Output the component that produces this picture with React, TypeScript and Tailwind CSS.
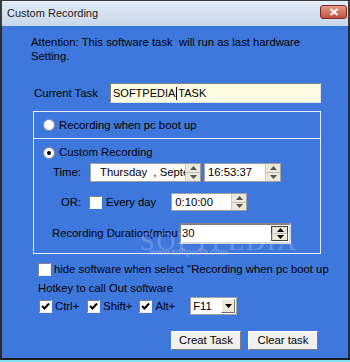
import React from 'react';

const font = { fontFamily: '"Liberation Sans", Arial, sans-serif' };

function Spin({ dark = false }: { dark?: boolean }) {
  const c = dark ? '#000' : '#555';
  return (
    <div className="flex h-full w-[15px] flex-col border-l border-[#c8c8c8] bg-[#ece9d8]">
      <div className="flex flex-1 items-center justify-center border-b border-[#bdbdbd]">
        <svg width="7" height="4" viewBox="0 0 7 4">
          <path d="M3.5 0 L7 4 L0 4 Z" fill={c} />
        </svg>
      </div>
      <div className="flex flex-1 items-center justify-center">
        <svg width="7" height="4" viewBox="0 0 7 4">
          <path d="M0 0 L7 0 L3.5 4 Z" fill={c} />
        </svg>
      </div>
    </div>
  );
}

function Radio({ on = false }: { on?: boolean }) {
  return (
    <span className="flex h-[12px] w-[12px] items-center justify-center rounded-full border border-[#8a8a8a] bg-white">
      {on && <span className="h-[4px] w-[4px] rounded-full bg-black" />}
    </span>
  );
}

function Check({ on = false }: { on?: boolean }) {
  return (
    <span className="flex h-[13px] w-[13px] shrink-0 items-center justify-center border border-t-[#808080] border-l-[#808080] border-r-[#f0f0f0] border-b-[#f0f0f0] bg-white">
      {on && (
        <svg width="9" height="9" viewBox="0 0 9 9">
          <path d="M1 4 L3.5 6.5 L8 1.5" stroke="#000" strokeWidth="2" fill="none" />
        </svg>
      )}
    </span>
  );
}

function Button({ label }: { label: string }) {
  return (
    <div className="flex h-[19px] w-[70px] items-center justify-center border border-t-white border-l-white border-r-[#7d7d7d] border-b-[#7d7d7d] bg-[#f1f1f1] text-black">
      {label}
    </div>
  );
}

export default function App() {
  return (
    <div className="relative flex h-[362px] w-[350px] flex-col overflow-hidden bg-[#3f78dc] text-[11.3px] text-black" style={font}>
      <div className="flex h-[26px] items-center justify-between border-l-2 border-t border-r-2 border-[#3a3a3a] bg-gradient-to-b from-[#e4ecf6] to-[#c6d7ec] pl-[5px] pr-[1px]">
        <span className="text-[11px] text-[#1b1b1b]">Custom Recording</span>
        <div className="mb-[3px] flex h-[14px] w-[27px] items-center justify-center rounded-[3px] border border-[#7d2a22] bg-gradient-to-b from-[#e39a88] to-[#c2503f]">
          <svg width="10" height="8" viewBox="0 0 10 8">
            <path d="M1.5 1 L8.5 7 M8.5 1 L1.5 7" stroke="#fff" strokeWidth="2" />
          </svg>
        </div>
      </div>

      <div className="flex flex-1 flex-col border-l-2 border-r-2 border-[#2a2a2a] pl-[29px]">
        <p className="mt-[9px] leading-[14px]">
          Attention: This software task&nbsp; will run as last hardware
          <br />
          Setting.
        </p>

        <div className="mt-[20px] flex h-[20px] items-center">
          <span className="ml-[3px] w-[76px]">Current Task</span>
          <div className="flex h-[20px] w-[211px] items-center border border-t-[#808080] border-l-[#808080] border-r-[#e0e0e0] border-b-[#e0e0e0] bg-[#fffbe2] pl-[2px] text-[11px]">
            SOFTPEDIA<span className="mx-[1px] inline-block h-[13px] w-px bg-black" />TASK
          </div>
        </div>

        <div className="ml-[2px] mt-[8px] flex h-[143px] w-[288px] flex-col border border-[#e6edf8]">
          <div className="flex h-[26px] items-center gap-[4px] pl-[9px]">
            <Radio />
            <span>Recording when pc boot up</span>
          </div>
          <div className="h-px bg-[#e6edf8]" />
          <div className="mt-[6px] flex h-[15px] items-center gap-[4px] pl-[9px]">
            <Radio on />
            <span>Custom Recording</span>
          </div>
          <div className="mt-[3px] flex h-[19px] items-center">
            <span className="ml-[19px] w-[37px]">Time:</span>
            <div className="flex h-[19px] w-[111px] items-stretch border border-[#a0a0a0] bg-white">
              <span className="flex-1 overflow-hidden whitespace-nowrap pl-[9px] leading-[17px]">Thursday&nbsp; , September</span>
              <Spin />
            </div>
            <div className="ml-[3px] flex h-[19px] w-[77px] items-stretch border border-[#a0a0a0] bg-white">
              <span className="flex-1 pl-[3px] leading-[17px]">16:53:37</span>
              <Spin />
            </div>
          </div>
          <div className="mt-[11px] flex h-[18px] items-center">
            <span className="ml-[27px] w-[28px]">OR:</span>
            <Check />
            <span className="ml-[4px]">Every day</span>
            <div className="ml-[15px] flex h-[18px] w-[76px] items-stretch border border-[#a0a0a0] bg-white">
              <span className="flex-1 pl-[3px] leading-[16px]">0:10:00</span>
              <Spin />
            </div>
          </div>
          <div className="mt-[12px] flex h-[21px] items-center">
            <span className="ml-[18px] w-[126px] overflow-hidden whitespace-nowrap">Recording Duration(minute)</span>
            <div className="ml-[1px] flex h-[21px] w-[112px] items-stretch border-2 border-t-[#808080] border-l-[#808080] border-r-[#d8d8d8] border-b-[#d8d8d8] bg-white">
              <span className="flex-1 pl-[1px] leading-[17px]">30</span>
              <div className="my-[1px] mr-[1px] border border-[#404040]">
                <Spin dark />
              </div>
            </div>
          </div>
        </div>

        <div className="mt-[9px] flex h-[13px] items-center gap-[3px] pl-[7px]">
          <Check />
          <span className="whitespace-nowrap">hide software when select &quot;Recording when pc boot up</span>
        </div>

        <div className="mt-[5px] pl-[7px] leading-[14px]">Hotkey to call Out software</div>

        <div className="mt-[2px] flex h-[18px] items-center pl-[8px]">
          <Check on />
          <span className="ml-[3px]">Ctrl+</span>
          <span className="ml-[8px]"><Check on /></span>
          <span className="ml-[3px]">Shift+</span>
          <span className="ml-[7px]"><Check on /></span>
          <span className="ml-[3px]">Alt+</span>
          <div className="ml-[15px] flex h-[18px] w-[47px] items-stretch border border-[#a0a0a0] bg-white">
            <span className="flex-1 pl-[2px] leading-[16px]">F11</span>
            <div className="my-[1px] mr-[1px] flex w-[14px] items-center justify-center border border-t-white border-l-white border-r-[#707070] border-b-[#707070] bg-[#ece9d8]">
              <svg width="7" height="4" viewBox="0 0 7 4">
                <path d="M0 0 L7 0 L3.5 4 Z" fill="#000" />
              </svg>
            </div>
          </div>
        </div>

        <div className="mt-[16px] flex gap-[7px] pl-[140px]">
          <Button label="Creat Task" />
          <Button label="Clear task" />
        </div>
      </div>
      <div className="h-[2px] bg-[#1e1e1e]" />
      <div className="h-[2px] bg-[#7fe3f0]" />

      <div className="pointer-events-none absolute left-[140px] top-[222px] text-[26px] tracking-[2px] text-white opacity-20" style={{ fontFamily: '"Liberation Serif", serif' }}>
        SOFTPEDIA
      </div>
      <div className="pointer-events-none absolute left-[150px] top-[246px] text-[9px] text-white opacity-30">
        www.softpedia.com
      </div>
    </div>
  );
}
